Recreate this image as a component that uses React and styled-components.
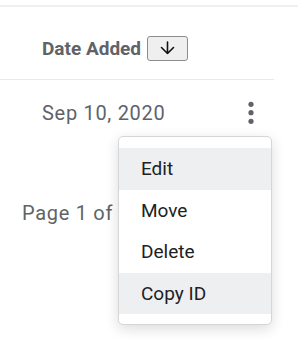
import React from "react";
import styled, { createGlobalStyle } from "styled-components";

const Global = createGlobalStyle`
  html, body { margin: 0; padding: 0; background: #ffffff; }
  body { font-family: Roboto, "Liberation Sans", sans-serif; }
`;

const Page = styled.div`
  width: 298px;
  height: 340px;
  padding-top: 5px;
  box-sizing: border-box;
  overflow: hidden;
`;

const TopRule = styled.div`
  height: 2px;
  background: #efefef;
`;

const HeaderRow = styled.div`
  display: flex;
  align-items: center;
  gap: 6px;
  height: 72px;
  box-sizing: border-box;
  padding: 10px 0 0 42px;
`;

const HeaderLabel = styled.span`
  font-size: 19px;
  font-weight: 700;
  color: #5f6368;
`;

const SortButton = styled.button`
  display: flex;
  align-items: center;
  justify-content: center;
  width: 41px;
  height: 25px;
  padding: 0;
  border: 1px solid #8c8c8c;
  border-radius: 3px;
  background: #efefef;
  color: #111;
`;

const Divider = styled.div`
  width: 274px;
  height: 1px;
  background: #e8e8e8;
`;

const DataRow = styled.div`
  display: flex;
  align-items: center;
  justify-content: space-between;
  height: 66px;
  padding-left: 42px;
  width: 274px;
  box-sizing: border-box;
  padding-right: 18px;
`;

const DateText = styled.span`
  font-size: 20px;
  letter-spacing: 0.7px;
  color: #5f6368;
`;

const KebabCell = styled.div`
  position: relative;
  display: flex;
  align-items: center;
  justify-content: center;
  width: 10px;
  height: 24px;
`;

const Menu = styled.div`
  position: absolute;
  top: 35px;
  right: -16px;
  width: 152px;
  padding: 11px 0 10px;
  background: #fff;
  border: 1px solid #d6d6d6;
  border-radius: 5px;
  box-shadow: 0 4px 14px rgba(0, 0, 0, 0.14);
  z-index: 2;
`;

const MenuItem = styled.div`
  display: flex;
  align-items: center;
  height: 41.5px;
  padding-left: 22px;
  font-size: 19px;
  color: #202124;
  background: ${(p) => (p.$active ? "#eeeff1" : "transparent")};
`;

const Pagination = styled.div`
  display: flex;
  align-items: center;
  height: 40px;
  padding-left: 22px;
  margin-top: 47px;
`;

const PageText = styled.span`
  font-size: 20px;
  letter-spacing: 0.7px;
  color: #5f6368;
`;

const ArrowDown = () => (
  <svg width="15" height="14" viewBox="0 0 15 14" fill="none">
    <path d="M7.5 1 V12.5 M1.5 6.5 L7.5 12.5 L13.5 6.5" stroke="#111" strokeWidth="1.6" strokeLinecap="round" strokeLinejoin="round" />
  </svg>
);

const Kebab = () => (
  <svg width="6" height="24" viewBox="0 0 6 24">
    <circle cx="3" cy="3.3" r="2.6" fill="#5f6368" />
    <circle cx="3" cy="11.7" r="2.6" fill="#5f6368" />
    <circle cx="3" cy="20.3" r="2.6" fill="#5f6368" />
  </svg>
);

export default function App() {
  const items = [
    { label: "Edit", active: true },
    { label: "Move" },
    { label: "Delete" },
    { label: "Copy ID", active: true },
  ];
  return (
    <Page>
      <Global />
      <TopRule />
      <HeaderRow>
        <HeaderLabel>Date Added</HeaderLabel>
        <SortButton aria-label="Sort">
          <ArrowDown />
        </SortButton>
      </HeaderRow>
      <Divider />
      <DataRow>
        <DateText>Sep 10, 2020</DateText>
        <KebabCell>
          <Kebab />
          <Menu>
            {items.map((it) => (
              <MenuItem key={it.label} $active={it.active}>
                {it.label}
              </MenuItem>
            ))}
          </Menu>
        </KebabCell>
      </DataRow>
      <Pagination>
        <PageText>Page 1 of</PageText>
      </Pagination>
    </Page>
  );
}
